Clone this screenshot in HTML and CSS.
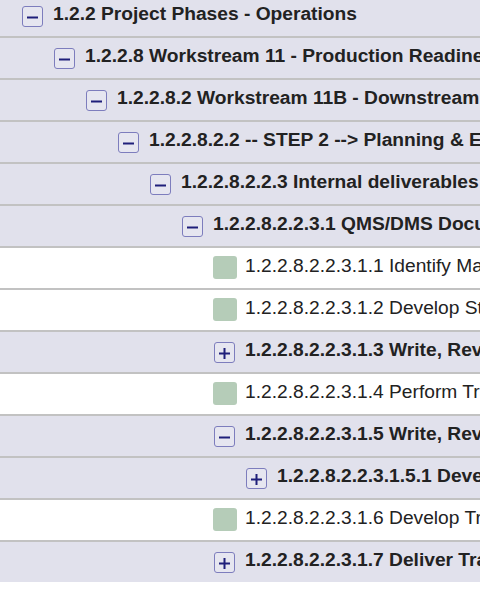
FILE: index.html
```html
<!DOCTYPE html>
<html>
<head>
<meta charset="utf-8">
<link rel="stylesheet" href="styles.css">
</head>
<body>
<div class="tree">
  <div class="row group l0"><span class="slot"><span class="toggle"><svg viewBox="0 0 21 21" width="21" height="21"><path d="M5 11.5h11" stroke="#1f1f7a" stroke-width="2"/></svg></span></span><span class="label bold">1.2.2 Project Phases - Operations</span></div>
  <div class="row group l1"><span class="slot"><span class="toggle"><svg viewBox="0 0 21 21" width="21" height="21"><path d="M5 11.5h11" stroke="#1f1f7a" stroke-width="2"/></svg></span></span><span class="label bold">1.2.2.8 Workstream 11 - Production Readiness</span></div>
  <div class="row group l2"><span class="slot"><span class="toggle"><svg viewBox="0 0 21 21" width="21" height="21"><path d="M5 11.5h11" stroke="#1f1f7a" stroke-width="2"/></svg></span></span><span class="label bold">1.2.2.8.2 Workstream 11B - Downstream Operations</span></div>
  <div class="row group l3"><span class="slot"><span class="toggle"><svg viewBox="0 0 21 21" width="21" height="21"><path d="M5 11.5h11" stroke="#1f1f7a" stroke-width="2"/></svg></span></span><span class="label bold">1.2.2.8.2.2 -- STEP 2 --&gt; Planning &amp; Execution</span></div>
  <div class="row group l4"><span class="slot"><span class="toggle"><svg viewBox="0 0 21 21" width="21" height="21"><path d="M5 11.5h11" stroke="#1f1f7a" stroke-width="2"/></svg></span></span><span class="label bold">1.2.2.8.2.2.3 Internal deliverables</span></div>
  <div class="row group l5"><span class="slot"><span class="toggle"><svg viewBox="0 0 21 21" width="21" height="21"><path d="M5 11.5h11" stroke="#1f1f7a" stroke-width="2"/></svg></span></span><span class="label bold">1.2.2.8.2.2.3.1 QMS/DMS Documentation</span></div>
  <div class="row leafrow l6"><span class="slot"><span class="leaf"></span></span><span class="label">1.2.2.8.2.2.3.1.1 Identify Manuals</span></div>
  <div class="row leafrow l6"><span class="slot"><span class="leaf"></span></span><span class="label">1.2.2.8.2.2.3.1.2 Develop Standards</span></div>
  <div class="row group l6"><span class="slot"><span class="toggle"><svg viewBox="0 0 21 21" width="21" height="21"><path d="M5 11.5h11M10.5 6v11" stroke="#1f1f7a" stroke-width="2"/></svg></span></span><span class="label bold">1.2.2.8.2.2.3.1.3 Write, Review and Approve</span></div>
  <div class="row leafrow l6"><span class="slot"><span class="leaf"></span></span><span class="label">1.2.2.8.2.2.3.1.4 Perform Training</span></div>
  <div class="row group l6"><span class="slot"><span class="toggle"><svg viewBox="0 0 21 21" width="21" height="21"><path d="M5 11.5h11" stroke="#1f1f7a" stroke-width="2"/></svg></span></span><span class="label bold">1.2.2.8.2.2.3.1.5 Write, Review and Approve</span></div>
  <div class="row group l7"><span class="slot"><span class="toggle"><svg viewBox="0 0 21 21" width="21" height="21"><path d="M5 11.5h11M10.5 6v11" stroke="#1f1f7a" stroke-width="2"/></svg></span></span><span class="label bold">1.2.2.8.2.2.3.1.5.1 Develop Procedures</span></div>
  <div class="row leafrow l6"><span class="slot"><span class="leaf"></span></span><span class="label">1.2.2.8.2.2.3.1.6 Develop Training</span></div>
  <div class="row group l6 last"><span class="slot"><span class="toggle"><svg viewBox="0 0 21 21" width="21" height="21"><path d="M5 11.5h11M10.5 6v11" stroke="#1f1f7a" stroke-width="2"/></svg></span></span><span class="label bold">1.2.2.8.2.2.3.1.7 Deliver Training</span></div>
</div>
</body>
</html>
```

FILE: styles.css
```css
html, body {
  margin: 0;
  padding: 0;
  background: #ffffff;
  overflow: hidden;
}

.tree {
  margin-top: -4px;
  font-family: "Liberation Sans", Arial, sans-serif;
  font-size: 19.2px;
  color: #222222;
}

.row {
  display: flex;
  align-items: flex-start;
  height: 42px;
  box-sizing: border-box;
  padding-top: 7px;
  border-bottom: 2px solid #c2c2c2;
  white-space: nowrap;
  overflow: hidden;
}

.row.last {
  border-bottom: none;
  height: 40px;
}

.group { background: #e1e1ec; }
.leafrow { background: #ffffff; }

.l0 { padding-left: 21px; }
.l1 { padding-left: 53px; }
.l2 { padding-left: 85px; }
.l3 { padding-left: 117px; }
.l4 { padding-left: 149px; }
.l5 { padding-left: 181px; }
.l6 { padding-left: 213px; }
.l7 { padding-left: 245px; }

.slot {
  flex: 0 0 24px;
  width: 24px;
  display: flex;
  justify-content: flex-start;
}

.toggle {
  display: block;
  width: 21px;
  height: 21px;
  box-sizing: border-box;
  margin-top: 3px;
  margin-left: 1px;
  border: 1px solid #7d7dbd;
  border-radius: 3px;
  background: #e6e6f0;
  position: relative;
}

.toggle svg {
  display: block;
  position: absolute;
  left: -1px;
  top: -1px;
}

.leaf {
  display: block;
  width: 24px;
  height: 23px;
  margin-top: 1px;
  border-radius: 3px;
  background: #b5ccb8;
}

.label {
  margin-left: 8px;
  line-height: 22px;
}

.bold { font-weight: bold; }
```
